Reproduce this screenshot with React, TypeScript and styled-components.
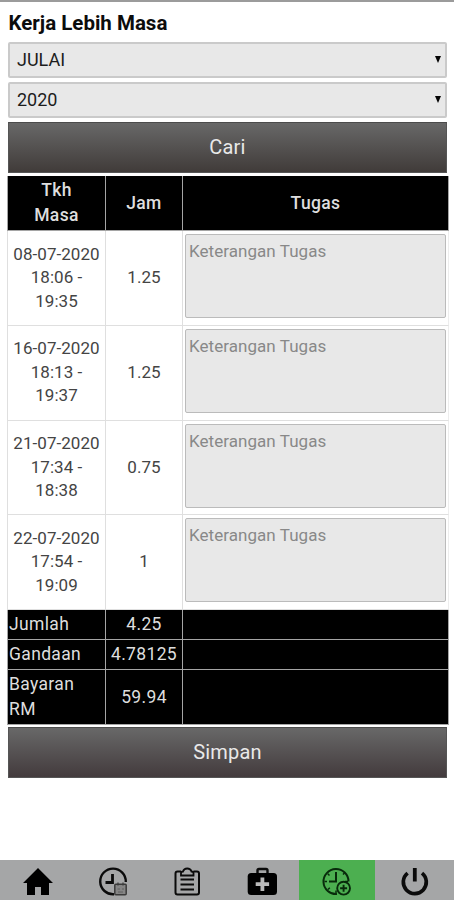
import React from 'react';
import styled, { createGlobalStyle, css } from 'styled-components';

const GlobalStyle = createGlobalStyle`
  *, *::before, *::after { box-sizing: border-box; }
  body { margin: 0; background: #fff; font-family: Roboto, "Liberation Sans", sans-serif; }
`;

const Screen = styled.div`
  display: flex;
  flex-direction: column;
  width: 454px;
  height: 900px;
  overflow: hidden;
  border-top: 2px solid #9b9b9b;
  background: #fff;
`;

const Content = styled.main`
  flex: 1;
  padding: 7px 6px 0 7px;
`;

const Title = styled.h1`
  margin: 0 0 3px 1.5px;
  height: 30px;
  font-size: 20.5px;
  font-weight: 700;
  line-height: 29px;
  color: #0c0c0c;
`;

const SelectBox = styled.div`
  display: flex;
  align-items: center;
  justify-content: space-between;
  height: 36px;
  margin: 0 0 4px 1px;
  width: 439px;
  padding: 0 4px 1px 7px;
  border: 2px solid #cacaca;
  border-radius: 2px;
  background: #e8e8e8;
  color: #1c1c1c;
  font-size: 18px;
`;

const Caret = styled.span`
  width: 0;
  height: 0;
  border: 3.5px solid transparent;
  border-top: 7px solid #050505;
  border-bottom: 0;
`;

const Action = styled.button<{ $warm?: boolean }>`
  display: block;
  width: 439px;
  height: 51px;
  margin: 0 0 0 1px;
  padding: 0;
  border: 1px solid #555;
  border-top-color: #4b4b4b;
  background: linear-gradient(#686868, ${(p) => (p.$warm ? '#433b3d' : '#403b39')});
  color: #e9e9e9;
  font: 400 20px/47px Roboto, sans-serif;
  letter-spacing: 0.2px;
`;

const Table = styled.div`
  width: 442px;
  margin: 3px 0 2px;
`;

const dark = css`
  background: #000;
  color: #dedede;
  border-color: #a5a5a5;
`;

const Row = styled.div<{ $height: number; $dark?: boolean }>`
  display: grid;
  grid-template-columns: 98px 77px 1fr;
  height: ${(p) => p.$height}px;
  border-bottom: 1px solid #dfdfdf;
  border-right: 1px solid #ededed;
  color: #444;
  ${(p) => p.$dark && dark}
`;

const Cell = styled.div<{ $left?: boolean; $head?: boolean; $dark?: boolean }>`
  display: flex;
  align-items: center;
  justify-content: ${(p) => (p.$left ? 'flex-start' : 'center')};
  padding-left: ${(p) => (p.$left ? 1 : 0)}px;
  border-left: 1px solid ${(p) => (p.$dark ? '#a5a5a5' : '#dfdfdf')};
  text-align: ${(p) => (p.$left ? 'left' : 'center')};
  white-space: pre-line;
  font-size: ${(p) => (p.$dark ? 17.5 : 17)}px;
  font-weight: ${(p) => (p.$head ? 500 : 400)};
  line-height: ${(p) => (p.$dark ? 25 : 23.5)}px;
  letter-spacing: ${(p) => (p.$dark ? 0.35 : 0.05)}px;
`;

const NoteCell = styled.div`
  padding: 3px 2px 0;
  border-left: 1px solid #dfdfdf;
`;

const Note = styled.textarea`
  display: block;
  width: 261px;
  height: 84px;
  padding: 4px 3px;
  border: 1px solid #bbb;
  border-radius: 2px;
  background: #e8e8e8;
  resize: none;
  outline: none;
  font: 400 17px/24px Roboto, sans-serif;
  letter-spacing: 0.05px;
  &::placeholder { color: #888; opacity: 1; }
`;

const Nav = styled.nav`
  display: grid;
  grid-template-columns: repeat(4, 74.75px) 75.5px 1fr;
  height: 40px;
  flex: none;
  background: #a5a6a7;
`;

const NavItem = styled.a<{ $active?: boolean }>`
  display: flex;
  justify-content: center;
  padding-top: 7px;
  padding-left: 1px;
  background: ${(p) => (p.$active ? '#4caf50' : 'transparent')};
`;

const Icon = styled.svg`
  display: block;
  width: 32px;
  height: 32px;
  fill: none;
  stroke: #0b0b0b;
  stroke-width: 2;
`;

const records = [
  { when: '08-07-2020\n18:06 -\n19:35', hours: '1.25' },
  { when: '16-07-2020\n18:13 -\n19:37', hours: '1.25' },
  { when: '21-07-2020\n17:34 -\n18:38', hours: '0.75' },
  { when: '22-07-2020\n17:54 -\n19:09', hours: '1' },
];

const totals = [
  { label: 'Jumlah', value: '4.25', height: 30 },
  { label: 'Gandaan', value: '4.78125', height: 30 },
  { label: 'Bayaran\nRM', value: '59.94', height: 55 },
];

const HomeIcon = () => (
  <Icon viewBox="0 0 32 32">
    <path d="M16 1 L31 16 H27 V28 H19 V20 H13 V28 H5 V16 H1 Z" fill="#000" stroke="none" />
  </Icon>
);

const ClockCalendarIcon = () => (
  <Icon viewBox="0 0 32 32">
    <path d="M17 27.2 A12.8 12.8 0 1 1 28.8 15" strokeWidth="2.4" />
    <path d="M15.5 7 V15.5 H8.5" strokeWidth="2.8" />
    <rect x="17.8" y="17.3" width="11.4" height="10.5" rx="1" fill="#858585" stroke="#3b3b3b" strokeWidth="1.5" />
    <path d="M21 15.5 V18.5 M26 15.5 V18.5" stroke="#3b3b3b" strokeWidth="1.2" />
    <path d="M20.5 22 H23 M25 22 H27 M21 25 H26" stroke="#606060" strokeWidth="1" />
  </Icon>
);

const ClipboardIcon = () => (
  <Icon viewBox="0 0 32 32">
    <path d="M10 4.5 H6.5 Q4.5 4.5 4.5 6.5 V25.5 Q4.5 27.5 6.5 27.5 H26 Q28 27.5 28 25.5 V6.5 Q28 4.5 26 4.5 H22.5" />
    <path d="M10 8.5 V6 Q10 4.5 12 4.5 Q13 1.5 16.2 1.5 Q19.5 1.5 20.5 4.5 Q22.5 4.5 22.5 6 V8.5 Z" strokeWidth="1.8" />
    <path d="M9.5 12.5 H23 M9.5 17.5 H23 M9.5 22.5 H23" strokeWidth="1.8" />
  </Icon>
);

const MedicalIcon = () => (
  <Icon viewBox="0 0 32 32">
    <path d="M11.5 7 V3.5 Q11.5 2 13 2 H20 Q21.5 2 21.5 3.5 V7" strokeWidth="2.4" />
    <rect x="1.7" y="6" width="29.3" height="22" rx="3.5" fill="#000" stroke="none" />
    <path d="M16.4 10.5 V24 M9.7 17.2 H23.1" stroke="#b9b9b9" strokeWidth="3.8" />
  </Icon>
);

const ClockPlusIcon = () => (
  <Icon viewBox="0 0 32 32">
    <g stroke="#082b0b">
      <path d="M16 27 A12.5 12.5 0 1 1 27.5 14.5" strokeWidth="2" />
      <path d="M15 5 V14.5 H8" />
      <path d="M3.5 14.5 H6 M24 14.5 H27 M15 23.5 V26 M6.8 6.8 L8.5 8.5 M22 7.5 L23.5 6 M7 22.5 L8.8 20.8" strokeWidth="1.5" />
      <circle cx="22.6" cy="21.2" r="6.4" fill="#4caf50" strokeWidth="1.9" />
      <path d="M22.6 17.7 V24.7 M19.1 21.2 H26.1" strokeWidth="1.9" />
    </g>
  </Icon>
);

const PowerIcon = () => (
  <Icon viewBox="0 0 32 32">
    <path d="M15.8 1 V14.5" strokeWidth="3.8" />
    <path d="M8.6 6.1 A11.5 11.5 0 1 0 23 6.1" strokeWidth="3.7" />
  </Icon>
);

export default function App() {
  return (
    <>
      <GlobalStyle />
      <Screen>
        <Content>
          <Title>Kerja Lebih Masa</Title>
          <SelectBox>JULAI<Caret /></SelectBox>
          <SelectBox>2020<Caret /></SelectBox>
          <Action>Cari</Action>
          <Table>
            <Row $height={55} $dark>
              <Cell $head $dark>{'Tkh\nMasa'}</Cell>
              <Cell $head $dark>Jam</Cell>
              <Cell $head $dark>Tugas</Cell>
            </Row>
            {records.map((r) => (
              <Row key={r.when} $height={94.75}>
                <Cell>{r.when}</Cell>
                <Cell>{r.hours}</Cell>
                <NoteCell><Note placeholder="Keterangan Tugas" /></NoteCell>
              </Row>
            ))}
            {totals.map((t) => (
              <Row key={t.label} $height={t.height} $dark>
                <Cell $left $dark>{t.label}</Cell>
                <Cell $dark>{t.value}</Cell>
                <Cell $dark />
              </Row>
            ))}
          </Table>
          <Action $warm>Simpan</Action>
        </Content>
        <Nav>
          <NavItem><HomeIcon /></NavItem>
          <NavItem><ClockCalendarIcon /></NavItem>
          <NavItem><ClipboardIcon /></NavItem>
          <NavItem><MedicalIcon /></NavItem>
          <NavItem $active><ClockPlusIcon /></NavItem>
          <NavItem><PowerIcon /></NavItem>
        </Nav>
      </Screen>
    </>
  );
}
